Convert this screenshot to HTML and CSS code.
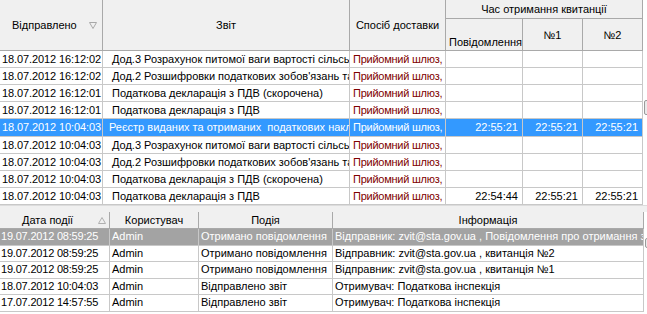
FILE: index.html
```html
<!DOCTYPE html>
<html>
<head>
<meta charset="utf-8">
<link rel="stylesheet" href="styles.css">
</head>
<body>
<div class="app">
  <div class="pane top-pane">
    <table class="grid g1">
      <colgroup>
        <col class="c1"><col class="c2"><col class="c3"><col class="c4"><col class="c5"><col class="c6">
      </colgroup>
      <thead>
        <tr class="h1">
          <th rowspan="2" class="hsort"><div class="hs"><span>Відправлено</span><svg width="8" height="7" viewBox="0 0 8 7"><path d="M0.5 0.5 H7.5 L4 6.5 Z" fill="none" stroke="#a8a8a8"/></svg></div></th>
          <th rowspan="2">Звіт</th>
          <th rowspan="2">Спосіб доставки</th>
          <th colspan="3" class="group">Час отримання квитанції</th>
        </tr>
        <tr class="h2">
          <th class="bottom">Повідомлення</th>
          <th>№1</th>
          <th>№2</th>
        </tr>
      </thead>
      <tbody>
        <tr><td class="dt">18.07.2012 16:12:02</td><td class="rep">Дод.3 Розрахунок питомої ваги вартості сільськогосподарських товарів</td><td class="way">Прийомний шлюз,</td><td class="tm"></td><td class="tm"></td><td class="tm"></td></tr>
        <tr><td class="dt">18.07.2012 16:12:02</td><td class="rep">Дод.2 Розшифровки податкових зобов'язань та податкового кредиту</td><td class="way">Прийомний шлюз,</td><td class="tm"></td><td class="tm"></td><td class="tm"></td></tr>
        <tr><td class="dt">18.07.2012 16:12:01</td><td class="rep">Податкова декларація з ПДВ (скорочена)</td><td class="way">Прийомний шлюз,</td><td class="tm"></td><td class="tm"></td><td class="tm"></td></tr>
        <tr><td class="dt">18.07.2012 16:12:01</td><td class="rep">Податкова декларація з ПДВ</td><td class="way">Прийомний шлюз,</td><td class="tm"></td><td class="tm"></td><td class="tm"></td></tr>
        <tr class="sel"><td class="dt">18.07.2012 10:04:03</td><td class="rep rs">Реєстр виданих та отриманих &nbsp;податкових накладних</td><td class="way">Прийомний шлюз,</td><td class="tm">22:55:21</td><td class="tm">22:55:21</td><td class="tm">22:55:21</td></tr>
        <tr><td class="dt">18.07.2012 10:04:03</td><td class="rep">Дод.3 Розрахунок питомої ваги вартості сільськогосподарських товарів</td><td class="way">Прийомний шлюз,</td><td class="tm"></td><td class="tm"></td><td class="tm"></td></tr>
        <tr><td class="dt">18.07.2012 10:04:03</td><td class="rep">Дод.2 Розшифровки податкових зобов'язань та податкового кредиту</td><td class="way">Прийомний шлюз,</td><td class="tm"></td><td class="tm"></td><td class="tm"></td></tr>
        <tr><td class="dt">18.07.2012 10:04:03</td><td class="rep">Податкова декларація з ПДВ (скорочена)</td><td class="way">Прийомний шлюз,</td><td class="tm"></td><td class="tm"></td><td class="tm"></td></tr>
        <tr><td class="dt">18.07.2012 10:04:03</td><td class="rep">Податкова декларація з ПДВ</td><td class="way">Прийомний шлюз,</td><td class="tm">22:54:44</td><td class="tm">22:55:21</td><td class="tm">22:55:21</td></tr>
      </tbody>
    </table>
    <div class="vscroll"><div class="thumb t1"></div></div>
  </div>
  <div class="splitter"></div>
  <div class="pane bottom-pane">
    <table class="grid g2">
      <colgroup>
        <col class="d1"><col class="d2"><col class="d3"><col class="d4">
      </colgroup>
      <thead>
        <tr>
          <th class="hsort2"><div class="hs2"><span>Дата події</span><svg width="8" height="7" viewBox="0 0 8 7"><path d="M0.5 6.5 H7.5 L4 0.5 Z" fill="none" stroke="#b0b0b0"/></svg></div></th>
          <th>Користувач</th>
          <th>Подія</th>
          <th>Інформація</th>
        </tr>
      </thead>
      <tbody>
        <tr class="sel2"><td class="dt2">19.07.2012 08:59:25</td><td>Admin</td><td>Отримано повідомлення</td><td>Відправник: zvit@sta.gov.ua , Повідомлення про отримання звіту</td></tr>
        <tr><td class="dt2">19.07.2012 08:59:25</td><td>Admin</td><td>Отримано повідомлення</td><td>Відправник: zvit@sta.gov.ua , квитанція №2</td></tr>
        <tr><td class="dt2">19.07.2012 08:59:25</td><td>Admin</td><td>Отримано повідомлення</td><td>Відправник: zvit@sta.gov.ua , квитанція №1</td></tr>
        <tr><td class="dt2">18.07.2012 10:04:03</td><td>Admin</td><td>Відправлено звіт</td><td>Отримувач: Податкова інспекція</td></tr>
        <tr><td class="dt2">17.07.2012 14:57:55</td><td>Admin</td><td>Відправлено звіт</td><td>Отримувач: Податкова інспекція</td></tr>
      </tbody>
    </table>
    <div class="vscroll"><div class="thumb t2"></div></div>
  </div>
</div>
</body>
</html>
```
FILE: styles.css
```css
html, body {
  margin: 0;
  padding: 0;
  background: #ffffff;
}
body {
  width: 647px;
  height: 314px;
  overflow: hidden;
  font-family: "Liberation Sans", Arial, sans-serif;
  font-size: 11px;
  color: #000;
}
.app {
  display: flex;
  flex-direction: column;
  width: 647px;
}
.pane {
  display: flex;
  width: 665px;
}
.top-pane {
  height: 205px;
  border-bottom: 1px solid #dcdcdc;
}
.splitter {
  height: 6px;
  background: #f0f0f0;
}
.grid {
  border-collapse: separate;
  border-spacing: 0;
  table-layout: fixed;
  flex: none;
}
.g1 { width: 643px; }
.g2 { width: 644px; }
.c1 { width: 103px; }
.c2 { width: 247px; }
.c3 { width: 96px; }
.c4 { width: 77px; }
.c5 { width: 60px; }
.c6 { width: 60px; }
.d1 { width: 110px; }
.d2 { width: 89px; }
.d3 { width: 134px; }
.d4 { width: 311px; }

.grid th {
  background: #f0f0f0;
  font-weight: normal;
  border-right: 1px solid #a9a9a9;
  border-bottom: 1px solid #a9a9a9;
  padding: 0;
  white-space: nowrap;
  overflow: hidden;
  text-align: center;
  vertical-align: middle;
}
.g1 .h1 th { height: 18px; }
.g1 .h2 th { height: 29px; }
.g1 th.group { line-height: 18px; }
.g1 th.bottom {
  vertical-align: bottom;
  padding-bottom: 2px;
  text-align: left;
  padding-left: 3px;
}
.hs {
  display: flex;
  align-items: center;
  justify-content: space-between;
  padding: 0 5px 0 12px;
}
.hs svg { margin-top: 1px; }
.hs2 {
  display: flex;
  align-items: center;
  justify-content: flex-start;
  gap: 25px;
  padding-left: 22px;
}
.grid td {
  border-right: 1px solid #c8c8c8;
  border-bottom: 1px solid #c8c8c8;
  padding: 0 3px;
  white-space: nowrap;
  overflow: hidden;
  line-height: 16px;
}
.g1 td.dt {
  padding-left: 2px;
  padding-right: 0;
  letter-spacing: -0.1px;
}
.g1 td.rep { padding-left: 9px; padding-right: 0; }
.g1 td.rs { padding-left: 6px; }
.g1 td.way {
  color: #800000;
  padding-left: 3px;
  padding-right: 0;
  letter-spacing: -0.25px;
}
.g1 td.tm {
  text-align: right;
  padding-right: 4px;
}
.g1 tr.sel td {
  background: #3399ff;
  color: #ffffff;
}
.g2 th {
  height: 16px;
  line-height: 16px;
}
.g2 td {
  line-height: 15.6px;
  padding-left: 2px;
}
.g2 td.dt2 {
  padding-left: 1px;
  padding-right: 0;
  letter-spacing: -0.2px;
}
.g2 tr.sel2 td {
  background: #a3a3a3;
  color: #ffffff;
}
.vscroll {
  position: relative;
  width: 17px;
  flex: none;
  margin-left: 1px;
}
.thumb {
  position: absolute;
  left: 0;
  width: 15px;
  height: 13px;
  border: 1px solid #9a9a9a;
  border-radius: 2px;
  background: #eaeaea;
}
.t1 { top: 100px; }
.t2 { top: 26px; height: 8px; }
```
